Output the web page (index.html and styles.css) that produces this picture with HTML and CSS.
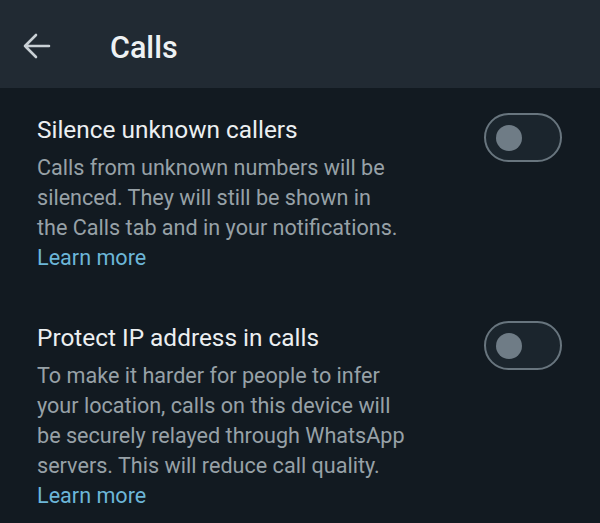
FILE: index.html
```html
<!DOCTYPE html>
<html lang="en">
<head>
    <meta charset="UTF-8">
    <meta name="viewport" content="width=device-width, initial-scale=1.0">
    <title>Calls</title>
    <link rel="stylesheet" href="styles.css">
</head>
<body>
    <header class="topbar">
        <svg class="back" width="28" height="26" viewBox="0 0 28 26">
            <path d="M2 13 H26 M13 2 L2 13 L13 24" fill="none" stroke="#c9d0d5" stroke-width="2.6" stroke-linecap="round" stroke-linejoin="round"/>
        </svg>
        <h1>Calls</h1>
    </header>
    <main class="list">
        <section class="item">
            <div class="text">
                <h2>Silence unknown callers</h2>
                <p>Calls from unknown numbers will be<br>silenced. They will still be shown in<br>the Calls tab and in your notifications.</p>
                <a class="learn" href="#">Learn more</a>
            </div>
            <div class="switch"><span class="knob"></span></div>
        </section>
        <section class="item">
            <div class="text">
                <h2>Protect IP address in calls</h2>
                <p>To make it harder for people to infer<br>your location, calls on this device will<br>be securely relayed through WhatsApp<br>servers. This will reduce call quality.</p>
                <a class="learn" href="#">Learn more</a>
            </div>
            <div class="switch"><span class="knob"></span></div>
        </section>
    </main>
</body>
</html>
```

FILE: styles.css
```css
body {
    margin: 0;
    background-color: #121a21;
    font-family: Roboto, "Liberation Sans", sans-serif;
    height: 523px;
    overflow: hidden;
}
.topbar {
    height: 88px;
    background-color: #212a33;
    display: flex;
    align-items: center;
    padding-left: 23px;
    box-sizing: border-box;
}
.back {
    display: block;
    margin-top: 4px;
}
.topbar h1 {
    margin: 0 0 0 59px;
    font-size: 30.5px;
    font-weight: 500;
    color: #eef1f3;
    padding-top: 6px;
}
.list {
    padding: 27px 38px 0 37px;
}
.item {
    display: flex;
    justify-content: space-between;
    align-items: flex-start;
    margin-bottom: 50px;
}
.item:last-child {
    margin-bottom: 0;
}
.item h2 {
    margin: 0 0 8px;
    font-size: 24.4px;
    font-weight: 400;
    line-height: 30px;
    color: #eceff1;
}
.item p {
    margin: 0;
    font-size: 21.6px;
    line-height: 30px;
    color: #97a1a7;
}
.learn {
    display: block;
    font-size: 21.6px;
    line-height: 30px;
    color: #6cb6d8;
    text-decoration: none;
}
.switch {
    width: 78px;
    height: 49px;
    margin-top: -2px;
    box-sizing: border-box;
    border: 2.5px solid #68757e;
    border-radius: 25px;
    background-color: #1b252d;
    display: flex;
    align-items: center;
    padding-left: 10px;
}
.knob {
    width: 26px;
    height: 26px;
    border-radius: 50%;
    background-color: #6f7c86;
}
```
